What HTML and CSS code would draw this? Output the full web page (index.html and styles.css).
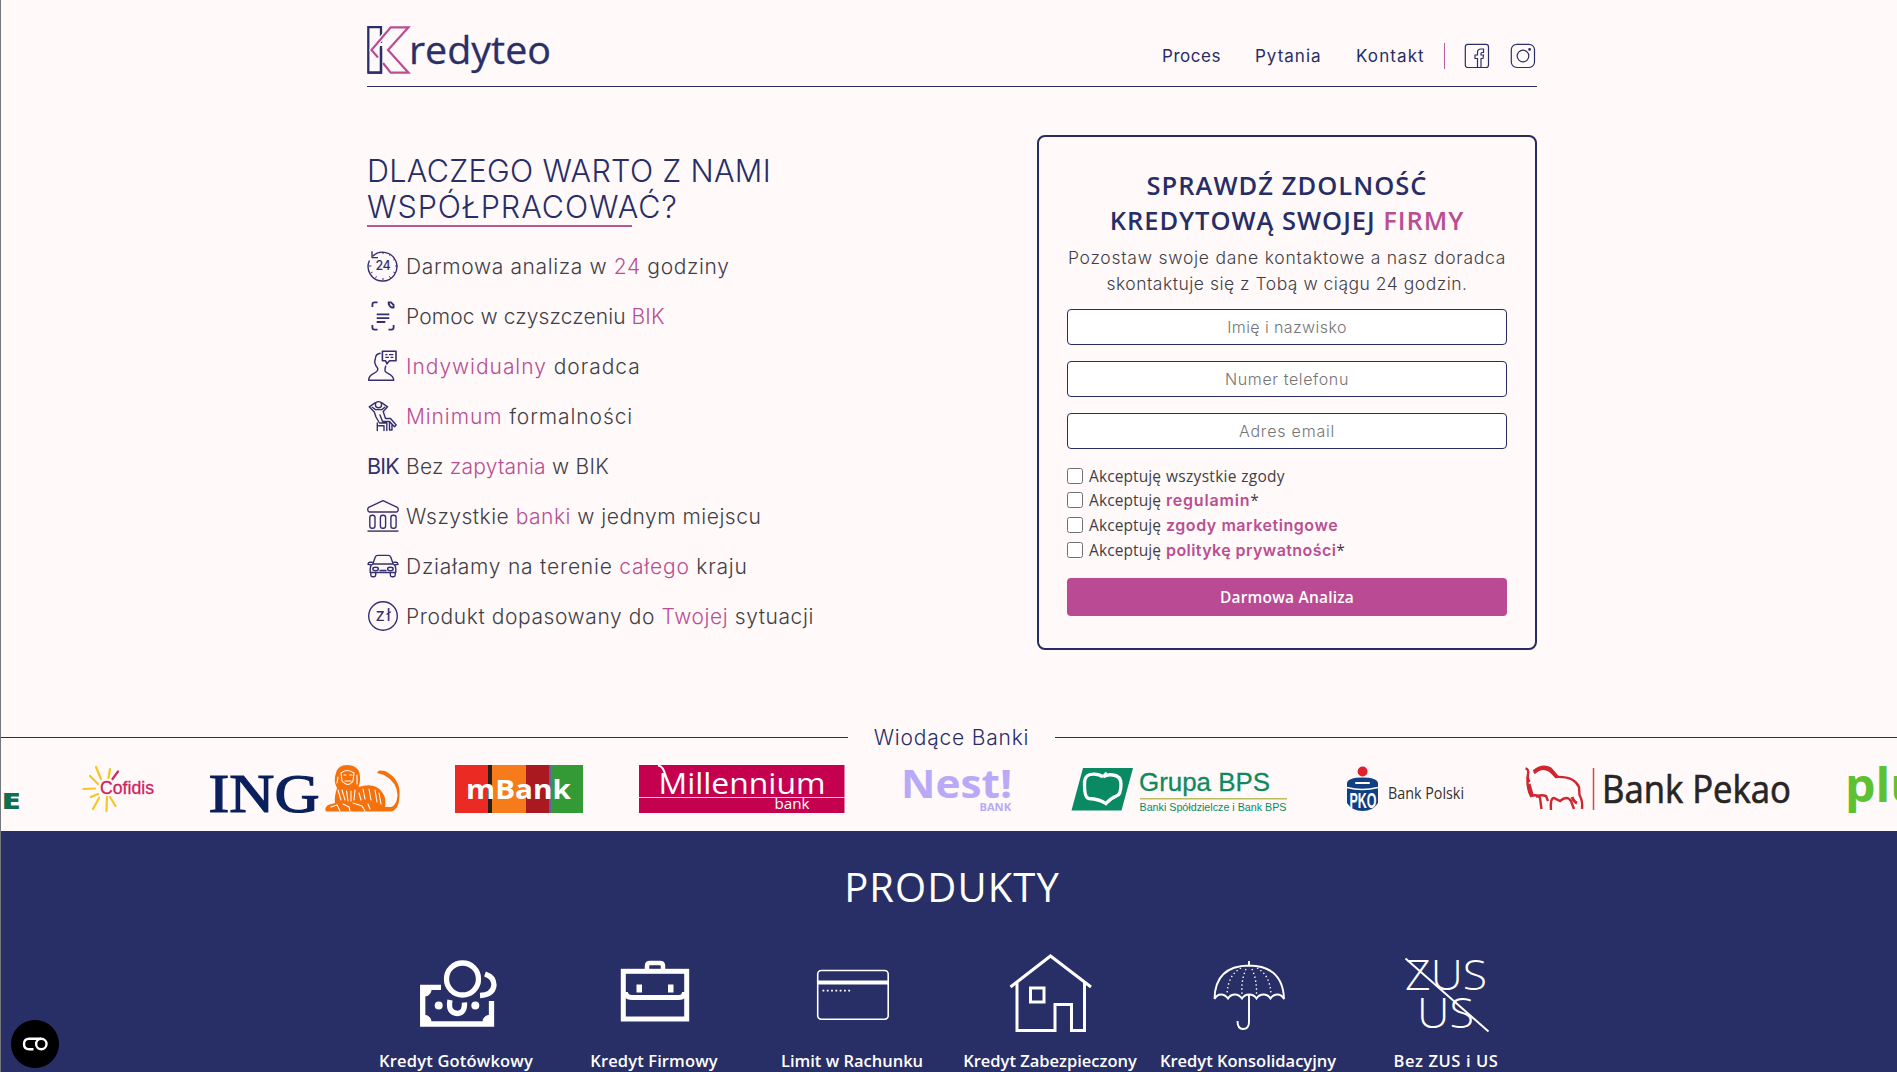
FILE: index.html
```html
<!DOCTYPE html>
<html lang="pl">
<head>
<meta charset="utf-8">
<title>Kredyteo</title>
<link rel="stylesheet" href="styles.css">
</head>
<body>
<div class="page">
  <header class="header container">
    <a class="logo">
      <svg width="190" height="54" viewBox="367 24 190 54" fill="none">
        <path d="M381 43V27.2H368.3V72.6H381V46" stroke="#2b2f68" stroke-width="2.3"/>
        <path d="M384 35L372 50L378.5 57.5M383 62L390.7 72.7H408.5L388 50L408.5 27.3H390.7L384 35" stroke="#fff9f9" stroke-width="4.5"/>
        <path d="M381 48V72.6H368.3" stroke="#2b2f68" stroke-width="2.3"/>
        <path d="M378 57.5L371.5 50L390.7 27.3H408.5L388 50L408.5 72.7H390.7L383 63" stroke="#bb4d94" stroke-width="2.2"/>
        <text x="409" y="64" class="logo-word" textLength="142" lengthAdjust="spacingAndGlyphs">redyteo</text>
      </svg>
    </a>
    <nav class="nav">
      <a class="n1">Proces</a><a class="n2">Pytania</a><a class="n3">Kontakt</a>
      <span class="divider"></span>
      <svg class="fb" width="26" height="26" viewBox="0 0 26 26" fill="none" stroke="#2b2f68" stroke-width="1.2"><rect x="1.3" y="1.3" width="23.2" height="23.2" rx="2.5"/><path d="M13.5 24.5V15.5H11V12H13.5V9.5Q13.5 6 17 6H19.5V9.5H18Q17 9.5 17 10.5V12H19.5L19 15.5H17V24.5"/></svg>
      <svg width="26" height="26" viewBox="0 0 26 26" fill="none" stroke="#2b2f68" stroke-width="1.2"><rect x="1.3" y="1.3" width="23.2" height="23.2" rx="5.5"/><circle cx="13" cy="13" r="5.8"/><circle cx="19.6" cy="6.4" r=".8" fill="#2b2f68"/></svg>
    </nav>
  </header>

  <main class="hero container">
    <section class="why">
      <h1><span class="h-a">DLACZEGO WARTO Z NAMI</span><br><span class="h-b">WSPÓŁPRACOWAĆ?</span></h1>
      <ul class="benefits">
        <li><svg class="ic" viewBox="0 0 32 32"><path d="M5.6 6.2A14.4 14.4 0 1 1 2.5 10.5"/><path d="M5 1.2V7.6H11"/><path d="M16 2v2M16 28v2M2 16h2.4M28 16h2.4M23.5 4l-1 1.6M28 9l-1.6.9M28 23l-1.6-.9M23.5 28l-1-1.6M8.5 28l1-1.6M4 23l1.6-.9" stroke-width="1"/><text x="8.4" y="20.3" class="ic24" textLength="15.2">24</text></svg><span class="t1">Darmowa analiza w <b>24</b> godziny</span></li>
        <li><svg class="ic thick" viewBox="0 0 32 32"><path d="M5.4 7V4.5Q5.4 2.4 7.5 2.4H10.5M5.4 25V27.5Q5.4 29.6 7.5 29.6H10.5M26.6 25V27.5Q26.6 29.6 24.5 29.6H21.5M21.5 2.4H24L26.6 5V7.5H24.5Q21.8 6 21.5 2.4ZM9.7 14.3H22.3M9.7 18.2H22.3M9.7 22H18.3"/></svg><span class="t2">Pomoc w czyszczeniu <b>BIK</b></span></li>
        <li><svg class="ic" viewBox="0 0 32 32"><path d="M13.7 3.3Q8.4 3.5 8.2 9.5L7.6 12L9 16Q11.5 18 10.5 20.5C9 24 1.6 23.5 1.6 30.2H26.7C26.7 24 19.5 24 18 21Q17.6 18 19 15.6"/><path d="M15.4 1.2H29V10.8H22.5L20 13.8L18.6 10.8H15.4Z" stroke-width="1.6"/><path d="M18.3 4.6H20.5M22 4.6H26.3M18.3 7.4H22M23.5 7.4H26.3" stroke-width="1.2"/></svg><span class="t3"><b>Indywidualny</b> doradca</span></li>
        <li><svg class="ic" viewBox="0 0 32 32" stroke-linecap="round"><circle cx="11.5" cy="4.7" r="3.1"/><path d="M8.4 2.7L2.2 6.8L7.3 12M14.6 2.7L20.6 6.8L16.2 11.5M5.200 7.200L8.500 9.600H14.800L17.800 7.200M7.300 12L9 17L12.500 23H19.800V30.500M16.200 11.500L18.500 18.500H23.500L29.200 25L27.500 26.800L22.500 21.500H15.500L13 15M10.300 23V30.500M10.300 25.800H17V30.500M22.500 22V30H25V24.500"/></svg><span class="t4"><b>Minimum</b> formalności</span></li>
        <li><span class="ic bik">BIK</span><span class="t5">Bez <b>zapytania</b> w BIK</span></li>
        <li><svg class="ic" viewBox="0 0 32 32"><path d="M16 .7L30.3 7.4Q31.4 8 31.2 10Q31 12 29.5 12H2.5Q1 12 .8 10Q.6 8 1.7 7.4Z"/><rect x="2.8" y="15.2" width="5.2" height="13" rx="2.3"/><rect x="13.4" y="15.2" width="5.2" height="13" rx="2.3"/><rect x="23.9" y="15.2" width="5.2" height="13" rx="2.3"/><path d="M.5 31.1H31.5"/></svg><span class="t6">Wszystkie <b>banki</b> w jednym miejscu</span></li>
        <li><svg class="ic" viewBox="0 0 32 32"><path d="M5.8 14L8.2 7.2Q8.8 5.4 11 5.4H21Q23.2 5.4 23.8 7.2L26.2 14M5.8 14H26.2Q28.8 15.5 28.8 19V22.5H3.2V19Q3.2 15.5 5.8 14M3.8 22.5V25Q3.8 26.7 5.5 26.7H7Q8.7 26.7 8.7 25V22.5M23.3 22.5V25Q23.3 26.7 25 26.7H26.5Q28.2 26.7 28.2 25V22.5M12.5 20.5H19.5M5.5 12.3H2.6Q1.2 12.3 1 14.3L4.2 15M26.5 12.3H29.4Q30.8 12.3 31 14.3L27.8 15"/><ellipse cx="8.6" cy="19" rx="2.8" ry="1.7"/><ellipse cx="23.4" cy="19" rx="2.8" ry="1.7"/></svg><span class="t7">Działamy na terenie <b>całego</b> kraju</span></li>
        <li><svg class="ic" viewBox="0 0 32 32"><circle cx="16" cy="16" r="14.3"/><text x="8.6" y="21" class="iczl" textLength="15">zł</text></svg><span class="t8">Produkt dopasowany do <b>Twojej</b> sytuacji</span></li>
      </ul>
    </section>

    <form class="card">
      <h2><span class="f-a">SPRAWDŹ ZDOLNOŚĆ</span><br><span class="f-b">KREDYTOWĄ SWOJEJ <em>FIRMY</em></span></h2>
      <p><span class="p-a">Pozostaw swoje dane kontaktowe a nasz doradca</span><br><span class="p-b">skontaktuje się z Tobą w ciągu 24 godzin.</span></p>
      <input class="field i1" type="text" placeholder="Imię i nazwisko">
      <input class="field i2" type="text" placeholder="Numer telefonu">
      <input class="field i3" type="text" placeholder="Adres email">
      <div class="consents">
        <label><i class="box"></i><span class="ak">Akceptuję</span><span class="c1">wszystkie zgody</span></label>
        <label><i class="box"></i><span class="ak">Akceptuję</span><a class="c2">regulamin</a><span>*</span></label>
        <label><i class="box"></i><span class="ak">Akceptuję</span><a class="c3">zgody marketingowe</a></label>
        <label><i class="box"></i><span class="ak">Akceptuję</span><a class="c4">politykę prywatności</a><span>*</span></label>
      </div>
      <button class="submit" type="button">Darmowa Analiza</button>
    </form>
  </main>

  <section class="banks">
    <div class="banks-title"><span>Wiodące Banki</span></div>
    <div class="strip">
      <svg width="54" height="66" viewBox="1 755 54 66"><text x="1.500" y="809" class="opens" font-weight="800" font-size="22" fill="#0e6e50" textLength="19" lengthAdjust="spacingAndGlyphs">E</text></svg>
      <svg width="127" height="66" viewBox="55 755 127 66">
        <g stroke="#f6c624" stroke-width="2.2" stroke-linecap="round"><path d="M96 767L101 779M90 776L98 784M83.500 789L95 788.5M91 797L98 794M93 809L99 798M106.5 811L107 797M115.500 806L110 797M108.500 778L110 769"/></g><path d="M112.500 779L118 771.5" stroke="#d22a68" stroke-width="2.200" stroke-linecap="round"/>
        <text x="100" y="794" class="sans" font-size="18" fill="#d0215f" stroke="#d0215f" stroke-width=".3" textLength="54" lengthAdjust="spacingAndGlyphs">Cofidis</text></svg>
      <svg width="245" height="66" viewBox="182 755 245 66">
        <text x="208.500" y="812" class="serif" font-size="54" fill="#0a1f5c" stroke="#0a1f5c" stroke-width="1.2" textLength="111" lengthAdjust="spacingAndGlyphs">ING</text>
        <path fill="#f4710c" d="M336 773Q338 765 347 765Q357 765 359.500 773Q361 781 358.500 787Q375 782 382 792Q387 799 385 807H391Q397 805 397.500 795Q397 782 384 775L377 773L379 770.500L385 771Q401 779 399.500 796Q399 810 391 811.500H326Q324 808 328 805L335 803Q334 797 337 788Q333 781 336 773Z"/>
        <g fill="none" stroke="#fff9f9" stroke-width="1.100" stroke-linecap="round"><path d="M341 773Q347 768 354 773L353 781Q348 788 342 781ZM344 775H346M349.500 775H352M345 781H351M338 790L341 800M342 790L345 800M346.500 791L348 801M351 791V801M355 790L354 800M331 807L337 805L340 811M343 804L349 807L350 811M353 803L362 806L365 811M363 789L365 799M369 789L371 800M375 790L377 802M379 793L381 804M359 793L361 800M368 804L370 809M338 777L337 783M357 775V784"/></g></svg>
      <svg width="184" height="66" viewBox="427 755 184 66"><path d="M455 765h33v48h-33z" fill="#ea2a23"/><path d="M488 765h4v48h-4z" fill="#261f1a"/><path d="M492 765h34v48h-34z" fill="#f67b1a"/><path d="M526 765h23v48h-23z" fill="#aa1820"/><path d="M549 765h2.500v48h-2.500z" fill="#5b62a8"/><path d="M551 765h32v48h-32z" fill="#339a35"/>
        <text x="466" y="798.500" class="opens" font-weight="700" font-size="27" fill="#fff" textLength="105" lengthAdjust="spacingAndGlyphs">mBank</text></svg>
      <svg width="262" height="66" viewBox="611 755 262 66"><path d="M639 765h205.500v48h-205.500z" fill="#c5004f"/><path d="M639 797.500h205.500" stroke="#f7c6da" stroke-width="1"/><path d="M658 765.500Q664 766 665.500 777" fill="none" stroke="#fff" stroke-width="2"/>
        <text x="658.500" y="793.500" class="opens" font-size="30" fill="#fff" textLength="167" lengthAdjust="spacingAndGlyphs">Millennium</text><text x="774.500" y="809" class="opens" font-size="15" fill="#fff" textLength="35" lengthAdjust="spacingAndGlyphs">bank</text></svg>
      <svg width="168" height="66" viewBox="873 755 168 66" fill="#b9a9f6"><text x="901" y="798" class="opens" font-weight="700" font-size="40" textLength="111" lengthAdjust="spacingAndGlyphs">Nest!</text><text x="979.500" y="811" class="opens" font-weight="700" font-size="10.500" textLength="31.500" lengthAdjust="spacingAndGlyphs">BANK</text></svg>
      <svg width="276" height="66" viewBox="1041 755 276 66"><path d="M1083 768H1133L1121.500 810.500H1071.500Z" fill="#0a8a62"/><path d="M1103 777Q1098 773 1090 774.500Q1084 776 1084.500 785Q1084.500 798 1089 798.500Q1099 799 1106 803.500Q1111 798 1116.500 796Q1121 795 1121 784Q1121 776 1113 775Q1107 774 1103 777L1107 773" fill="none" stroke="#fff" stroke-width="3.300"/>
        <text x="1139" y="790.500" class="sans" font-size="25.500" fill="#0d8a60" stroke="#0d8a60" stroke-width=".3" textLength="131" lengthAdjust="spacingAndGlyphs">Grupa BPS</text><path d="M1140 798.800H1287" stroke="#b9bd5d" stroke-width="1.400"/><text x="1139.500" y="811" class="sans" font-size="10.800" fill="#0d8a60" textLength="147" lengthAdjust="spacingAndGlyphs">Banki Spółdzielcze i Bank BPS</text></svg>
      <svg width="177" height="66" viewBox="1317 755 177 66"><circle cx="1362.600" cy="771.500" r="5" fill="#e2202c"/><path d="M1347 783Q1348 777.500 1362.500 777.500Q1377 777.500 1378 783V803Q1373 811 1362.500 811Q1352 811 1347 803Z" fill="#113f81"/><path d="M1356 783H1369" stroke="#fff" stroke-width="2" stroke-linecap="round"/><path d="M1347 787.500Q1362 791.500 1378 787.500" fill="none" stroke="#fff" stroke-width="1.300"/><text x="1349.500" y="807.500" class="sans" font-weight="700" font-size="22.500" fill="#fff" textLength="27" lengthAdjust="spacingAndGlyphs">PKO</text><text x="1388" y="798.700" class="opens" font-size="16" fill="#35312f" textLength="76" lengthAdjust="spacingAndGlyphs">Bank Polski</text></svg>
      <svg width="326" height="66" viewBox="1494 755 326 66"><g fill="none" stroke="#ce2730" stroke-width="2.400"><path d="M1525.500 768.500Q1529 769 1528 774Q1527 778 1529.500 782"/><path d="M1527.500 777Q1527 789 1531 796Q1538 794 1540 798L1541.500 809M1534 773Q1545 763 1556 777Q1574 776 1579 787L1579.500 795Q1583 801 1582 809M1551 810Q1550 798 1554 798L1560 801Q1567 795 1571 801L1574 809M1548 801L1546 796Q1540 794 1536 797" /><path d="M1534 772Q1542 765 1550 769L1557 777M1528.500 784L1532 796" stroke-width="4"/><path d="M1572 797Q1574 802 1577 803" stroke-width="3"/></g><path d="M1593.500 768V810" stroke="#d5494e" stroke-width="1.500"/><text x="1602" y="803" class="opens" font-size="39" fill="#272525" stroke="#272525" stroke-width=".7" textLength="189" lengthAdjust="spacingAndGlyphs">Bank Pekao</text></svg>
      <svg width="77" height="66" viewBox="1820 755 77 66"><text x="1845" y="802" class="opens" font-weight="700" font-size="47" fill="#5cc234" textLength="101" lengthAdjust="spacingAndGlyphs">plus</text></svg>
    </div>
  </section>

  <section class="products">
    <h2>PRODUKTY</h2>
    <div class="grid">
      <div class="prod"><svg viewBox="406 943 100 100"><path d="M441 987.300H422.700V1024H491.500V1001" stroke-width="5.300"/><path d="M425 990h6a6 6 0 0 1-6 6ZM425 1021.500v-6a6 6 0 0 1 6 6ZM489 1021.500h-6a6 6 0 0 1 6-6Z" fill="#fff"/><circle cx="462.500" cy="979" r="16" stroke-width="5.300"/><path d="M485 974Q494 977 494 985Q493 995 480 995.500" stroke-width="5.300"/><path d="M450 1000Q447.500 1013 457.500 1013.500Q465 1013 464.500 1002.500" stroke-width="5.300"/><circle cx="438.700" cy="1005.500" r="4" fill="#fff" stroke="none"/><circle cx="475.300" cy="1005.500" r="4" fill="#fff" stroke="none"/></svg><span class="q1">Kredyt Gotówkowy</span></div>
      <div class="prod"><svg viewBox="604 943 100 100"><rect x="623.300" y="971.300" width="63.400" height="47.700" stroke-width="5"/><path d="M625.500 992Q625.500 997.500 632 997.500H679Q684.500 997.500 684.500 992" stroke-width="5"/><path d="M647 970V966Q647 963 650 963H660Q663 963 663 966V970" stroke-width="4.500"/><path d="M636.500 984.500h5.500v8h-5.500zM668 984.500h5.500v8h-5.500z" fill="#fff" stroke="none"/></svg><span class="q2">Kredyt Firmowy</span></div>
      <div class="prod"><svg viewBox="802 943 100 100"><rect x="817.700" y="970.500" width="70.500" height="48.700" rx="3.500" stroke-width="1.600"/><path d="M818 982.500H888" stroke-width="4"/><path d="M822.500 990.700H851" stroke-width="1.800" stroke-dasharray="1.800 2.500"/></svg><span class="q3">Limit w Rachunku</span></div>
      <div class="prod"><svg viewBox="1000.500 943 100 100"><path d="M1011 987L1051 956L1091.500 987M1017.500 983V1030.500H1055.500V1004.500H1072V1030.500H1085V983" stroke-width="3"/><rect x="1031" y="988" width="13.500" height="14" stroke-width="3"/></svg><span class="q4">Kredyt Zabezpieczony</span></div>
      <div class="prod"><svg viewBox="1198 943 100 100" ><g stroke-width="1.900"><path d="M1249 961V966M1214.500 999Q1215 966 1249 965.500Q1283 966 1284 999Q1281.500 994.500 1277.500 994.500Q1273 994.500 1270.500 998.500Q1268 994.500 1263.500 994.500Q1259 994.500 1256.500 998.500Q1254 994.500 1249 994.500Q1244.500 994.500 1242 998.500Q1239 994.500 1235 994.500Q1230.500 994.500 1228 998.500Q1225 994.500 1221 994.500Q1217 994.500 1214.500 999M1249 995V1022Q1249 1029 1243 1029Q1237.500 1029 1237.500 1021"/></g><path d="M1241 968Q1228 975 1227 994M1246 969Q1241 980 1242 994M1252 969Q1257 980 1256.500 994M1257 968Q1270 975 1271 994" stroke-width="1.400" stroke-dasharray="1.400 2.600"/></svg><span class="q5">Kredyt Konsolidacyjny</span></div>
      <div class="prod"><svg class="zus" viewBox="1396 943 100 100"><text x="1405" y="989.500" textLength="82" lengthAdjust="spacingAndGlyphs">ZUS</text><text x="1417" y="1027.500" textLength="57" lengthAdjust="spacingAndGlyphs">US</text><path d="M1405.500 958.500L1488.500 1031.500" stroke-width="2"/></svg><span class="q6">Bez ZUS i US</span></div>
    </div>
  </section>
  <button class="cookie" type="button"><svg width="48" height="48" viewBox="0 0 48 48" fill="none" stroke="#fff" stroke-width="2.400"><path d="M30 18.800H18Q13 18.800 13 24Q13 29.200 18 29.200H22.500"/><circle cx="30.300" cy="24" r="5.200"/></svg></button>
</div>
</body>
</html>
```
FILE: styles.css
```css
* { box-sizing: border-box; }
body {
  margin: 0;
  height: 1072px;
  overflow: hidden;
  background: #fff9f9;
  font-family: Inter, sans-serif;
  font-weight: 300;
  color: #3f3f46;
}
.page { position: relative; height: 1072px; overflow: hidden; border-left: 1px solid #75777c; }
.container { width: 1170px; margin-left: 366px; }
h1, h2, p, ul { margin: 0; padding: 0; }

/* Header */
.header {
  height: 87px;
  border-bottom: 1px solid #2b2f55;
  display: flex;
  justify-content: space-between;
  padding-top: 24px;
}
.logo svg { display: block; overflow: visible; }
.logo-word { font: 400 39px "Open Sans", sans-serif; fill: #2b2f68; stroke: #2b2f68; stroke-width: .3; }
.nav { display: flex; align-items: center; height: 26px; margin: 19px 1px 0 0; color: #272d66; font-weight: 400; font-size: 17px; }
.nav a { line-height: 26px; white-space: nowrap; }
.n1 { width: 93px; letter-spacing: .55px; }
.n2 { width: 101px; letter-spacing: 1px; }
.n3 { width: 88px; letter-spacing: 1.1px; }
.divider { width: 1px; height: 26px; background: #bd5d9b; margin-right: 19px; }
.fb { margin-right: 20px; }

/* Hero */
.hero { display: flex; justify-content: space-between; height: 605px; padding-top: 48px; }
.why { padding-top: 18px; }
h1 {
  position: relative;
  font-weight: 300;
  font-size: 30.5px;
  line-height: 36px;
  color: #272d66;
  height: 74px;
  white-space: nowrap;
}
h1::after { content: ""; position: absolute; left: 0; top: 72px; width: 265px; height: 2px; background: #b8578f; }
.h-a { letter-spacing: .33px; }
.h-b { letter-spacing: .95px; }
.benefits { list-style: none; margin-top: 14px; }
.benefits li { height: 50px; display: flex; align-items: center; gap: 7px; font-size: 21px; white-space: nowrap; }
.benefits b, .card em { color: #b94f93; font-weight: inherit; font-style: normal; }
.t1 { letter-spacing: .63px; }
.t2 { letter-spacing: .1px; }
.t3 { letter-spacing: .95px; }
.t4 { letter-spacing: .9px; }
.t5 { letter-spacing: .25px; }
.t6 { letter-spacing: .5px; }
.t7 { letter-spacing: .78px; }
.t8 { letter-spacing: .58px; }
.ic { width: 32px; height: 32px; flex: none; fill: none; stroke: #34306f; stroke-width: 1.4; stroke-linejoin: round; }
.thick { stroke-width: 1.8; }
.ic text { fill: #34306f; stroke: none; font-family: Inter, sans-serif; }
.ic24 { font-size: 12.5px; font-weight: 500; }
.iczl { font-size: 17px; font-weight: 400; }
.bik { color: #34306f; font-size: 21.5px; font-weight: 400; line-height: 32px; letter-spacing: -.8px; }

/* Contact form */
.card { width: 500px; height: 515px; border: 2px solid #272d5f; border-radius: 8px; padding: 31px 28px 0; text-align: center; }
.card h2 { font-family: "Open Sans", sans-serif; font-weight: 600; font-size: 25.5px; line-height: 35px; color: #272d66; white-space: nowrap; }
.f-a { letter-spacing: 1.04px; }
.f-b { letter-spacing: .97px; }
.card p { font-size: 17.5px; line-height: 26px; margin-top: 7px; height: 64px; white-space: nowrap; }
.card p span { display: inline-block; }
.p-a { letter-spacing: .75px; }
.p-b { letter-spacing: .5px; }
.field {
  display: block;
  width: 440px;
  height: 36px;
  margin: 0 0 16px;
  border: 1px solid #272d5f;
  border-radius: 4px;
  background: #fff;
  text-align: center;
  font: 300 16px Inter, sans-serif;
  padding: 0;
}
.field::placeholder { color: #757575; opacity: 1; }
.i1 { letter-spacing: .42px; }
.i2 { letter-spacing: .6px; }
.i3 { letter-spacing: .8px; }
.consents { display: flex; flex-direction: column; text-align: left; padding-top: 2px; height: 113px; }
.consents label { display: flex; align-items: center; height: 25px; font: 400 15.5px "Open Sans", sans-serif; white-space: nowrap; }
.consents label:first-child { height: 23px; margin-top: -3px; }
.box { width: 16px; height: 16px; border: 1px solid #6f6f74; border-radius: 2.5px; background: #fff; margin-right: 6px; }
.ak { width: 77px; letter-spacing: .1px; }
.consents a { font: 600 16px Inter, sans-serif; color: #b94f93; }
.consents .c1 { letter-spacing: .3px; }
.consents .c2 { letter-spacing: .8px; }
.consents .c3 { letter-spacing: .55px; }
.consents .c4 { letter-spacing: .42px; }
.submit { display: block; width: 440px; height: 38px; border: 0; border-radius: 4px; padding: 0; background: #ba4a93; color: #fff; font: 600 15.5px "Open Sans", sans-serif; letter-spacing: .2px; }

/* Bank logos */
.banks { height: 139px; padding-top: 29px; }
.banks-title { display: flex; align-items: center; height: 33px; font-size: 21px; letter-spacing: .8px; color: #272d66; }
.banks-title::before { content: ""; width: 847px; height: 1px; background: #272d5f; }
.banks-title::after { content: ""; width: 842px; height: 1px; background: #272d5f; }
.banks-title span { width: 207px; text-align: center; white-space: nowrap; }
.strip { display: flex; height: 66px; margin-top: 1px; font-weight: 400; }
.strip svg { flex: none; display: block; overflow: visible; }
.sans { font-family: "Liberation Sans", sans-serif; }
.serif { font-family: "Liberation Serif", serif; }
.opens { font-family: "Open Sans", sans-serif; }

/* Products */
.products { background: #282e66; color: #fff; height: 241px; padding-top: 28px; }
.products h2 { font: 500 40px/56px "Open Sans", sans-serif; letter-spacing: 1.1px; text-align: center; padding-left: 6px; }
.grid { display: grid; grid-template-columns: repeat(6, 198px); margin: 28px 0 0 356px; }
.prod { display: flex; flex-direction: column; align-items: center; font: 600 16.5px/24px "Open Sans", sans-serif; white-space: nowrap; }
.prod svg { width: 100px; height: 100px; fill: none; stroke: #fff; margin-bottom: 6px; }
.prod .zus text { font: 300 42px "Open Sans", sans-serif; fill: #fff; stroke: none; }
.q1 { letter-spacing: .18px; }
.q2 { letter-spacing: .12px; }
.q6 { letter-spacing: .6px; }

.cookie { position: absolute; left: 10px; top: 1020px; width: 48px; height: 48px; border: 0; padding: 0; border-radius: 50%; background: #000; }
```
